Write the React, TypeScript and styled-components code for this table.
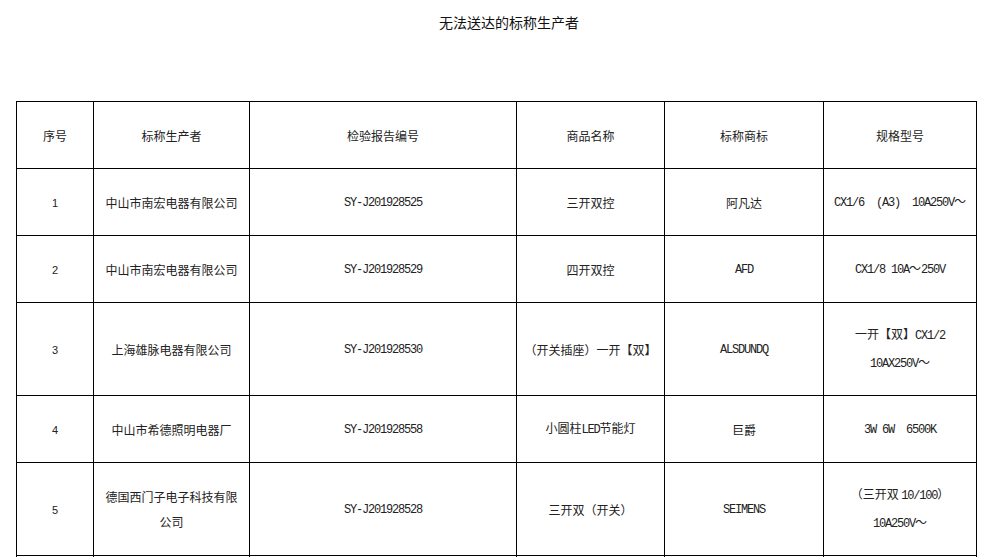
import React from "react";
import styled, { createGlobalStyle } from "styled-components";

const GlobalStyle = createGlobalStyle`
  html, body {
    margin: 0;
    padding: 0;
    background: #ffffff;
  }
  body {
    font-family: "Noto Sans CJK SC", "Liberation Sans", sans-serif;
    color: #222;
  }
`;

const Page = styled.div`
  width: 1005px;
  padding: 12px 0 0 16px;
  box-sizing: border-box;
`;

const Title = styled.h1`
  margin: 0;
  padding-left: 0;
  width: 960px;
  text-align: center;
  font-size: 14px;
  line-height: 20px;
  font-weight: normal;
  color: #111;
  transform: translateX(13px);
`;

const Table = styled.table`
  margin-top: 69px;
  width: 960px;
  table-layout: fixed;
  border-collapse: collapse;
  border: 1px solid #000;
`;

const Cell = styled.td<{ $h: number }>`
  height: ${(p) => p.$h}px;
  border: 1px solid #000;
  padding: 0 6px;
  text-align: center;
  vertical-align: middle;
  font-size: 12px;
  line-height: 25px;
  color: #222;
  box-sizing: border-box;
`;

const HeadCell = styled.th`
  height: 67px;
  border: 1px solid #000;
  padding: 0 6px;
  text-align: center;
  vertical-align: middle;
  font-size: 12px;
  line-height: 25px;
  font-weight: normal;
  color: #222;
  box-sizing: border-box;
`;

const Latin = styled.span`
  font-family: "Liberation Mono", monospace;
  letter-spacing: -1.2px;
  font-size: 12px;
`;

const Num = styled.span`
  font-family: "Liberation Sans", sans-serif;
  font-size: 11px;
`;

const cols = [77, 156, 267, 148, 159, 153];
const headers = ["序号", "标称生产者", "检验报告编号", "商品名称", "标称商标", "规格型号"];

type Row = { h: number; cells: React.ReactNode[] };

const rows: Row[] = [
  {
    h: 67,
    cells: [
      <Num>1</Num>,
      "中山市南宏电器有限公司",
      <Latin>SY-J201928525</Latin>,
      "三开双控",
      "阿凡达",
      <>
        <Latin>CX1/6</Latin>　<Latin>(A3)</Latin>　<Latin>10A250V</Latin>～
      </>,
    ],
  },
  {
    h: 67,
    cells: [
      <Num>2</Num>,
      "中山市南宏电器有限公司",
      <Latin>SY-J201928529</Latin>,
      "四开双控",
      <Latin>AFD</Latin>,
      <>
        <Latin>CX1/8 10A</Latin>～<Latin>250V</Latin>
      </>,
    ],
  },
  {
    h: 93,
    cells: [
      <Num>3</Num>,
      "上海雄脉电器有限公司",
      <Latin>SY-J201928530</Latin>,
      "（开关插座）一开【双】",
      <Latin>ALSDUNDQ</Latin>,
      <>
        一开【双】<Latin>CX1/2</Latin>
        <br />
        <Latin>10AX250V</Latin>～
      </>,
    ],
  },
  {
    h: 67,
    cells: [
      <Num>4</Num>,
      "中山市希德照明电器厂",
      <Latin>SY-J201928558</Latin>,
      <>
        小圆柱<Latin>LED</Latin>节能灯
      </>,
      "巨爵",
      <>
        <Latin>3W 6W</Latin>　<Latin>6500K</Latin>
      </>,
    ],
  },
  {
    h: 93,
    cells: [
      <Num>5</Num>,
      <>
        德国西门子电子科技有限
        <br />
        公司
      </>,
      <Latin>SY-J201928528</Latin>,
      "三开双（开关）",
      <Latin>SEIMENS</Latin>,
      <>
        （三开双 <Latin>10/100</Latin>）
        <br />
        <Latin>10A250V</Latin>～
      </>,
    ],
  },
  {
    h: 67,
    cells: ["", "", "", "", "", ""],
  },
];

export default function App() {
  return (
    <>
      <GlobalStyle />
      <Page>
        <Title>无法送达的标称生产者</Title>
        <Table>
          <colgroup>
            {cols.map((w, i) => (
              <col key={i} style={{ width: w }} />
            ))}
          </colgroup>
          <thead>
            <tr>
              {headers.map((h) => (
                <HeadCell key={h}>{h}</HeadCell>
              ))}
            </tr>
          </thead>
          <tbody>
            {rows.map((r, ri) => (
              <tr key={ri}>
                {r.cells.map((c, ci) => (
                  <Cell key={ci} $h={r.h}>
                    {c}
                  </Cell>
                ))}
              </tr>
            ))}
          </tbody>
        </Table>
      </Page>
    </>
  );
}
